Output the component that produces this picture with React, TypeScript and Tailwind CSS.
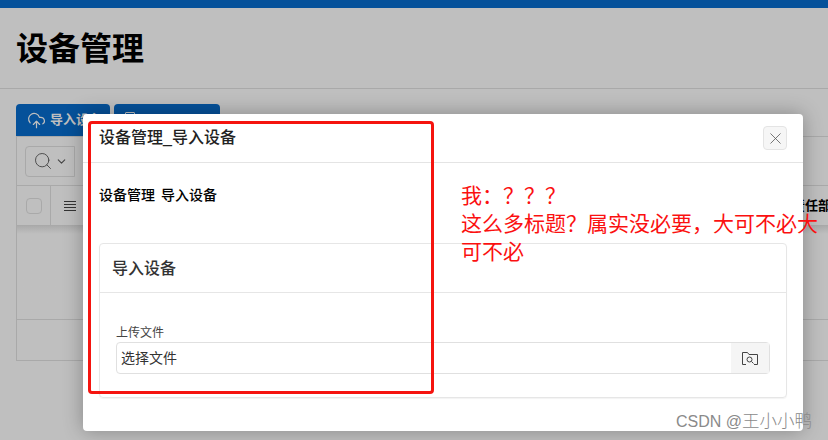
import { Search, ChevronDown, CloudUpload, X } from "lucide-react";

const CJK = "font-['Liberation_Sans','Noto_Sans_CJK_SC',sans-serif]";

const FolderSearch = () => (
  <svg width="18" height="15" viewBox="0 0 18 15" fill="none" stroke="#444" strokeWidth="1">
    <path d="M1.5 13.5V1.5H6.5L8 3.5H16.5V13.5" />
    <path d="M1.5 13.5H5M16.5 13.5H13" />
    <circle cx="8.5" cy="8.5" r="2.5" />
    <path d="M10.5 10.5L12.5 12.5" />
  </svg>
);

const Lines = () => (
  <svg width="14" height="12" viewBox="0 0 14 12" stroke="#333" strokeWidth="1">
    <path d="M1 1.5H13M1 4.5H13M1 7.5H13M1 10.5H13" />
  </svg>
);

const Background = () => (
  <div className="flex h-[440px] flex-col bg-[#bfbfbf]">
    <div className="h-2 bg-[#05519a]" />
    <div className="flex h-[81px] items-center border-b border-[#a9a9a9] pt-0.5 pl-4">
      <h1 className="text-[32px] font-bold text-black">设备管理</h1>
    </div>
    <div className="flex flex-col pt-[15px] pl-4">
      <div className="flex gap-1">
        <div className="flex h-8 w-[94px] items-center gap-1 overflow-hidden rounded-t-sm bg-[#05519a] pl-[11px] text-[13px] font-bold whitespace-nowrap text-[#bfbfbf]">
          <CloudUpload size={19} strokeWidth={1.5} className="shrink-0" />
          导入设备
        </div>
        <div className="h-8 w-[106px] rounded-t-sm bg-[#05519a] pt-2 pl-[11px]">
          <div className="h-3 w-2.5 rounded-[1px] border border-[#bfbfbf]" />
        </div>
      </div>
      <div className="flex h-[50px] items-center border-y border-l border-[#a9a9a9] pl-2">
        <div className="flex h-[31px] w-[50px] items-center gap-0.5 rounded-l-sm border border-[#a9a9a9] pl-[7px] text-[#444]">
          <Search size={20} strokeWidth={1.1} className="shrink-0" />
          <ChevronDown size={13} className="shrink-0" />
        </div>
      </div>
      <div className="flex h-10 items-center border-b border-l border-[#a9a9a9]">
        <div className="flex h-full w-[34px] shrink-0 items-center justify-center border-r border-[#a9a9a9]">
          <div className="size-4 rounded-sm border border-[#a9a9a9]" />
        </div>
        <div className="flex w-[38px] shrink-0 justify-center">
          <Lines />
        </div>
        <div className="ml-[703px] shrink-0 text-[13px] font-bold whitespace-nowrap text-black">责任部门</div>
      </div>
      <div className="h-[94px] border-b border-l border-[#a9a9a9] bg-gradient-to-b from-[#ababab] to-[#bfbfbf] to-[8px]" />
      <div className="h-[41px] border-b border-l border-[#a9a9a9]" />
    </div>
  </div>
);

const Modal = () => (
  <div className="absolute top-[114px] left-[83px] flex h-[317px] w-[720px] flex-col rounded-sm bg-white shadow-[0_0_20px_rgba(0,0,0,0.3)]">
    <div className="flex h-[49px] items-center justify-between border-b border-[#e4e4e4] px-4">
      <div className="text-base font-medium text-[#222]">设备管理_导入设备</div>
      <div className="flex size-6 items-center justify-center rounded-sm border border-[#e4e4e4] bg-[#f6f6f6] text-[#555]">
        <X size={19} strokeWidth={1} />
      </div>
    </div>
    <div className="flex flex-col px-4">
      <div className="flex gap-1.5 pt-[22px] text-sm leading-5 font-medium text-black">
        <span>设备管理</span>
        <span>导入设备</span>
      </div>
      <div className="mt-[38px] flex h-[155px] flex-col rounded-sm border border-[#e6e6e6] shadow-[0_1px_1px_rgba(0,0,0,0.05)]">
        <div className="flex h-[49px] items-center border-b border-[#e6e6e6] pt-0.5 pl-3 text-base font-medium text-[#333]">导入设备</div>
        <div className="flex flex-col px-4 pt-8">
          <div className="text-xs leading-4 text-[#444]">上传文件</div>
          <div className="mt-px flex h-8 items-center justify-between rounded-sm border border-[#e0e0e0] pl-1 text-sm text-[#333]">
            选择文件
            <div className="flex h-full w-[38px] items-center justify-center bg-[#f5f5f5]">
              <FolderSearch />
            </div>
          </div>
        </div>
      </div>
    </div>
  </div>
);

export default function App() {
  return (
    <div className={`relative h-[440px] w-[828px] overflow-hidden ${CJK}`}>
      <Background />
      <Modal />
      <div className="absolute top-[121px] left-[88px] h-[273px] w-[346px] rounded-sm border-[3px] border-[#f5140f]" />
      <div className="absolute top-[182px] left-[461px] w-[365px] text-[21px] leading-7 text-[#fb1010]">
        我：？？？
        <br />
        这么多标题？属实没必要，大可不必大可不必
      </div>
      <div className="absolute top-[408px] left-[676px] text-base font-light text-[#8a8a8a]">
        CSDN @<span className="text-[17.5px]">王小小鸭</span>
      </div>
    </div>
  );
}
